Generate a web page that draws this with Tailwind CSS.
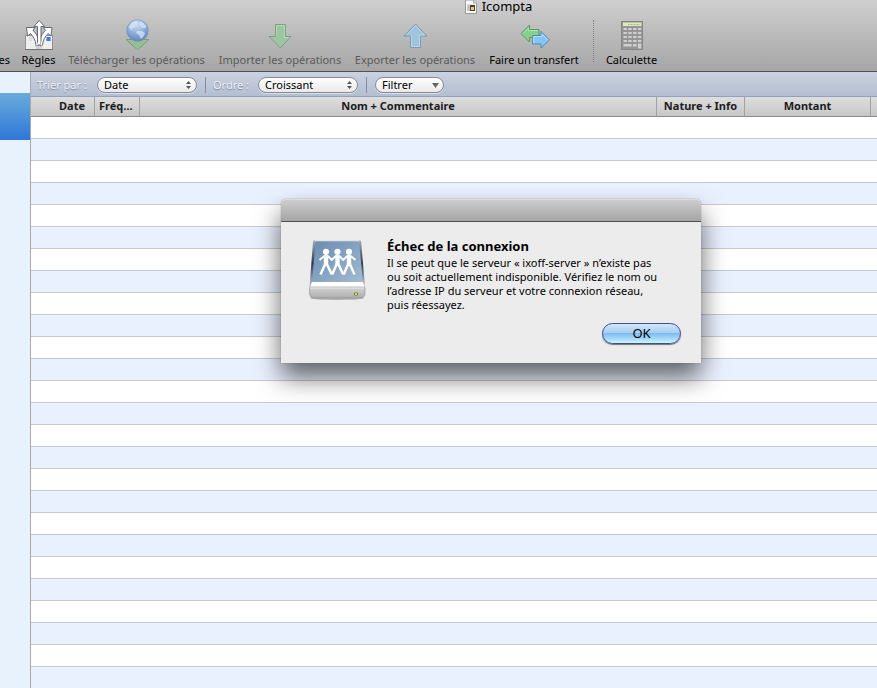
<!DOCTYPE html>
<html lang="fr">
<head>
<meta charset="utf-8">
<meta name="viewport" content="width=device-width,initial-scale=1">
<title>Icompta</title>
<script src="https://cdn.jsdelivr.net/npm/@tailwindcss/browser@4"></script>
</head>
<body class="relative h-screen flex flex-col overflow-hidden bg-white text-black text-[11px] font-['Lucida_Grande','Noto_Sans',sans-serif]">

<!-- ─────── Title + toolbar ─────── -->
<header class="shrink-0 bg-linear-to-b from-[#cfcfcf] to-[#a6a6a6] border-b border-[#515151]">
  <h1 class="flex items-center justify-center gap-1 h-[13px] pl-[119px] text-[13px] leading-[13px]">
    <svg class="w-[14px] h-[14px]" viewBox="0 0 14 14">
      <path d="M1.500 0h8l3 3v10.500h-11z" fill="#f8f8f8" stroke="#9a9a9a"/>
      <path d="M9.500 0v3h3" fill="#ddd" stroke="#aaa"/>
      <path d="M3 4.500h7V11H3z" fill="#c4c4ce"/><path d="M6 5h5v6H6z" fill="#444"/><path d="M7 7h3v3H7z" fill="#e9cf52"/>
    </svg>
    Icompta
  </h1>

  <nav class="flex h-[58px] pt-[5px] leading-4 whitespace-nowrap">
    <button class="flex flex-col items-end justify-end w-4 pr-1.5 pb-[3px]">es</button>
    <button class="flex flex-col items-center justify-between w-[45px] pb-[3px]">
      <svg class="w-8 h-8" viewBox="0 0 32 32">
        <path d="M2.500 17.500h27v14h-27z" fill="#efefef" stroke="#8f9296"/>
        <path d="M2 31.500h28" stroke="#6f7276"/>
        <path d="M23.500 19h4v4h-4z" fill="#3f74ee"/>
        <path d="M6 20h4M6 22h3" stroke="#ccc"/>
        <path d="M12 28h8M13 30h6" stroke="#a5a5a5" stroke-dasharray="2 .5"/>
        <g fill="#fff" stroke="#626b73" stroke-linejoin="round">
          <path d="M13 27C12.500 22 10 18 7.500 15.500L4.500 18 3.500 9.500h8.500L10 12.500C13.500 15.500 15.800 20 16 27z"/>
          <path d="M19.500 27C20 22 22.500 18 25 15.500L28 18 29 9.500h-8.500L22.500 12.500C19 15.500 16.700 20 16.500 27z"/>
          <path d="M14.500 27V8.500H11L16.200 2.500 21.500 8.500H18V27z"/>
        </g>
        <path d="M13.500 22l1.500 5h2.500l1.500-5v5h-5.500z" fill="#fff"/>
      </svg>
      Règles
    </button>
    <button class="flex flex-col items-center justify-between w-[151px] pb-[3px] text-[#5a5a5a]" disabled>
      <svg class="w-8 h-8" viewBox="0 0 32 32">
        <defs>
          <radialGradient id="globe" cx=".45" cy=".2" r=".85">
            <stop offset="0" stop-color="#d3e2f4"/><stop offset=".5" stop-color="#8fb0dc"/><stop offset="1" stop-color="#5c80b8"/>
          </radialGradient>
        </defs>
        <path d="M5 21.500h23L16.500 32z" fill="#93c193" stroke="#799f79"/>
        <circle cx="16.500" cy="12.500" r="10.800" fill="url(#globe)" stroke="#7891ba" stroke-width=".6"/>
        <path d="M7.500 9q2.500-5 8-6l1 2-3 2 1 2-3 1-1 3zM19 3.500q4 1 6.500 5l-2 2-3-1-2-3zM16 13l5 0 3 2-1 3-3 3-2-4-3-2z" fill="#dce8f3" opacity=".7"/>
      </svg>
      Télécharger les opérations
    </button>
    <button class="flex flex-col items-center justify-between w-[136px] pb-[3px] text-[#5a5a5a]" disabled>
      <svg class="w-8 h-8" viewBox="0 0 32 32">
        <path d="M11.500 6.500h10v12h5.500L16.500 30 5 18.500h6.500z" fill="#9cc5a0" stroke="#7fa183"/>
        <path d="M12.500 18V7.500h8V19.500h4" fill="none" stroke="#b5d8b8"/>
      </svg>
      Importer les opérations
    </button>
    <button class="flex flex-col items-center justify-between w-[134px] pb-[3px] text-[#5a5a5a]" disabled>
      <svg class="w-8 h-8" viewBox="0 0 32 32">
        <path d="M16.500 6L28 18h-6.500v11.500h-10V18H5z" fill="#9fc4dc" stroke="#7c9bb0"/>
        <path d="M7.500 17L16.500 7.500 25.500 17h-5v11.500h-8V17" fill="none" stroke="#b7d7ea"/>
      </svg>
      Exporter les opérations
    </button>
    <button class="flex flex-col items-center justify-between w-[104px] pb-[3px]">
      <svg class="w-8 h-8" viewBox="0 0 32 32">
        <path d="M3 15.500L11.500 7v4.500h9.500v8h-9.500V24z" fill="#83d28a" stroke="#5d9463"/>
        <path d="M5 15.500L10.500 10v2.500h9.500" fill="none" stroke="#a9e5ad"/>
        <path d="M31.500 22L23 13.500v4h-8.500v8.500H23v4z" fill="#84c6f3" stroke="#5489b0"/>
        <path d="M15.500 25v-6.500H24V16l6 6" fill="none" stroke="#b0dffa"/>
      </svg>
      Faire un transfert
    </button>
    <div class="w-[14px] h-11 flex justify-center pt-0.5"><span class="h-full border-l border-dotted border-[#808080]"></span></div>
    <button class="flex flex-col items-center justify-between w-[63px] pb-[3px]">
      <svg class="w-8 h-8" viewBox="0 0 32 32">
        <path d="M5.500 3.500h21v28h-21z" fill="#959595" stroke="#858585"/>
        <path d="M7 4.500h18.500v3.500H7z" fill="#dcebba"/><path d="M12 6.500h12" stroke="#a5b584" stroke-dasharray="1 .5"/>
        <path d="M7.500 11h18M7.500 15h18M7.500 19h18M7.500 23h18" stroke="#cfcfcf" stroke-width="2" stroke-dasharray="3.400 1.400"/>
        <path d="M7.500 26h8.200v2.500H7.500zM17 26h3.500v2.500H17zM22 25.500h3.300v5H22z" fill="#cfcfcf"/>
      </svg>
      Calculette
    </button>
  </nav>
</header>

<div class="flex flex-1 min-h-0">
  <!-- Sidebar -->
  <aside class="w-[31px] shrink-0 border-r border-[#a9a9a9] bg-[#e7f2fd] pt-[21px]">
    <div class="h-[47px] bg-linear-to-b from-[#6aabdb] to-[#2f76d8]"></div>
  </aside>

  <main class="flex-1 min-w-0 overflow-hidden">
    <!-- Sort / filter bar -->
    <form class="flex items-center h-[25px] pl-1.5 pt-0.5 bg-linear-to-b from-[#cbd2df] to-[#b3bed1] border-b border-[#94a1b8]">
      <label for="tri" class="w-[60px] text-[#eef1f6] text-shadow-[0_1px_1px_#77829a]">Trier par :</label>
      <div class="relative w-[100px]">
        <select id="tri" class="block appearance-none w-full h-4 pl-1.5 rounded-full border border-[#858b96] bg-linear-to-b from-white to-[#e9e9e9] leading-[14px] shadow-[0_1px_0_#d9dfe9]">
          <option>Date</option><option>Nom</option><option>Montant</option>
        </select>
        <svg class="absolute right-1.5 top-1 w-[5px] h-2 pointer-events-none" viewBox="0 0 5 8"><path d="M0 3L2.500 0 5 3zM0 5h5L2.500 8z" fill="#555"/></svg>
      </div>
      <span class="h-4 ml-2 mr-[7px] border-l border-[#838da0]"></span>
      <label for="ordre" class="w-[45px] text-[#eef1f6] text-shadow-[0_1px_1px_#77829a]">Ordre :</label>
      <div class="relative w-[100px]">
        <select id="ordre" class="block appearance-none w-full h-4 pl-1.5 rounded-full border border-[#858b96] bg-linear-to-b from-white to-[#e9e9e9] leading-[14px] shadow-[0_1px_0_#d9dfe9]">
          <option>Croissant</option><option>Décroissant</option>
        </select>
        <svg class="absolute right-1.5 top-1 w-[5px] h-2 pointer-events-none" viewBox="0 0 5 8"><path d="M0 3L2.500 0 5 3zM0 5h5L2.500 8z" fill="#555"/></svg>
      </div>
      <span class="h-4 ml-2 mr-2 border-l border-[#838da0]"></span>
      <button type="button" class="flex items-center justify-between w-[69px] h-4 pl-1.5 pr-1 rounded-full border border-[#858b96] bg-linear-to-b from-white to-[#e9e9e9] leading-[14px] shadow-[0_1px_0_#d9dfe9]">
        Filtrer
        <svg class="w-[7px] h-[5px]" viewBox="0 0 7 5"><path d="M0 0h7L3.500 5z" fill="#666"/></svg>
      </button>
    </form>

    <!-- Operations -->
    <table class="w-full table-fixed border-separate border-spacing-0">
      <colgroup>
        <col class="w-[64px]"><col class="w-[45px]"><col><col class="w-[88px]"><col class="w-[126px]"><col class="w-[6px]">
      </colgroup>
      <thead>
        <tr class="bg-linear-to-b from-[#dedede] to-[#c6c6c6] leading-[18px] text-[#1c1c1c] whitespace-nowrap [&>th]:h-5 [&>th]:p-0 [&>th]:align-top [&>th]:border-b [&>th]:border-b-[#8a8a8a] [&>th]:border-r [&>th]:border-r-[#a2a2a2] [&>th:last-child]:border-r-0">
          <th><div class="pr-[9px] text-right">Date</div></th>
          <th><div class="pl-1 text-left">Fréq…</div></th>
          <th>Nom + Commentaire</th>
          <th>Nature + Info</th>
          <th>Montant</th>
          <th></th>
        </tr>
      </thead>
      <tbody id="rows"></tbody>
    </table>
  </main>
</div>

<!-- ─────── Connection alert ─────── -->
<section role="alertdialog" aria-labelledby="alertTitle" aria-describedby="alertText"
     class="absolute left-[281px] top-[199px] w-[420px] rounded-t-[5px] bg-[#ececec] shadow-[0_0_1px_#555,0_14px_26px_rgba(0,0,0,.6)]">
  <div class="h-[23px] rounded-t-[5px] bg-linear-to-b from-[#cdcdcd] to-[#a5a5a5] border-t border-t-[#dcdcdc] border-b border-b-[#515151]"></div>
  <div class="flex gap-[18px] pl-6 pr-5 pt-4">
    <svg class="w-16 h-16 shrink-0" viewBox="0 0 64 64">
      <defs>
        <linearGradient id="lid" x1="0" y1="0" x2="1" y2="1"><stop offset="0" stop-color="#6a8bb0"/><stop offset="1" stop-color="#a3bad3"/></linearGradient>
        <linearGradient id="base" x1="0" y1="0" x2="0" y2="1"><stop offset="0" stop-color="#d4d4d4"/><stop offset="1" stop-color="#adadad"/></linearGradient>
        <linearGradient id="edge" x1="0" y1="0" x2="0" y2="1"><stop offset="0" stop-color="#a3adb8"/><stop offset=".5" stop-color="#2b3b4d"/><stop offset="1" stop-color="#c2c8d0"/></linearGradient>
      </defs>
      <ellipse cx="32" cy="60" rx="27" ry="2" fill="#000" opacity=".25"/>
      <path d="M10 2h44q2 0 2.200 2L60 49H4.500L8 4q.2-2 2-2z" fill="url(#edge)"/>
      <path d="M10 2h44l1 1.500H9.500z" fill="#dfe3e6"/>
      <path d="M10.500 3.500h43.500L58 44H7z" fill="url(#lid)"/>
      <path d="M7 44h51l2 6H5z" fill="#fff"/>
      <path d="M4.500 50q0-1 1-1h53.500q1 0 1 1v5q0 5-5 5H9.500q-5 0-5-5z" fill="url(#base)" stroke="#8d8d8d" stroke-width=".6"/>
      <path d="M5 50h54" stroke="#e8e8e8"/>
      <rect x="49" y="54.500" width="4" height="3" rx="1" fill="#77772e"/><circle cx="51" cy="56" r="1" fill="#f0f06a"/>
      <g fill="#fff">
        <circle cx="21" cy="13.800" r="3.100"/><circle cx="32.500" cy="13.800" r="3.100"/><circle cx="44" cy="13.800" r="3.100"/>
        <path d="M18.800 17.500h4.400v9h-4.400zM30.300 17.500h4.400v9h-4.400zM41.800 17.500h4.400v9h-4.400z"/>
      </g>
      <g fill="none" stroke="#fff" stroke-linejoin="round">
        <path d="M14.500 22L19 18.200h4L26.800 22 30.500 18.200h4L38.200 22 42 18.200h4L50.500 22" stroke-width="1.900"/>
        <path d="M15.500 36.500L20.200 26M21.800 26L26.800 36.500M27.200 36.500L31.700 26M33.300 26L38.200 36.500M38.700 36.500L43.200 26M44.800 26L49.500 36.500" stroke-width="2.500"/>
      </g>
    </svg>
    <div class="flex-1 min-w-0">
      <h2 id="alertTitle" class="text-[13px] leading-4 pb-0.5 font-bold">Échec de la connexion</h2>
      <p id="alertText" class="leading-[14px] whitespace-nowrap">Il se peut que le serveur « ixoff-server » n’existe pas<br>ou soit actuellement indisponible. Vérifiez le nom ou<br>l’adresse IP du serveur et votre connexion réseau,<br>puis réessayez.</p>
    </div>
  </div>
  <div class="flex justify-end pt-[11px] pr-5 pb-[19px]">
    <button class="w-[79px] h-[21px] rounded-full border border-[#3a4f96] bg-[linear-gradient(#d3e6f8_0%,#a6cff4_45%,#7fbcf0_50%,#a9dcfa_80%,#cff5ff_100%)] text-[13px] leading-[19px] shadow-[0_1px_1px_rgba(0,0,0,.5)]">OK</button>
  </div>
</section>

<script>
/* Empty striped rows filling the window */
const rowsEl = document.getElementById("rows");
const count  = Math.ceil((window.innerHeight - 117) / 22);
let html = "";
for(let i=0;i<count;i++){
  html += `<tr><td colspan="6" class="h-[22px] p-0 border-b border-[#c9c9c9] ${i%2 ? 'bg-[#eaf1fe]' : 'bg-white'}"></td></tr>`;
}
rowsEl.innerHTML = html;
</script>
</body>
</html>
